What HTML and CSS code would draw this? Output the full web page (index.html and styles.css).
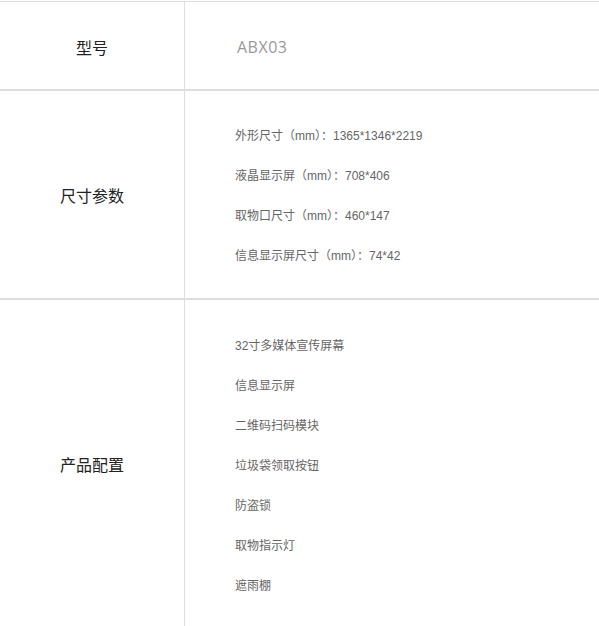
FILE: index.html
```html
<!DOCTYPE html>
<html lang="zh-CN">
<head>
    <meta charset="UTF-8" />
    <meta name="viewport" content="width=device-width, initial-scale=1.0"/>
    <title>产品参数</title>
    <link rel="stylesheet" href="styles.css">
</head>
<body>
<table class="spec-table">
    <tr class="row-model">
        <td class="spec-name">型号</td>
        <td class="spec-value model">ABX03</td>
    </tr>
    <tr class="row-size">
        <td class="spec-name">尺寸参数</td>
        <td class="spec-value">
            <p>外形尺寸（mm）：1365*1346*2219</p>
            <p>液晶显示屏（mm）：708*406</p>
            <p>取物口尺寸（mm）：460*147</p>
            <p>信息显示屏尺寸（mm）：74*42</p>
        </td>
    </tr>
    <tr class="row-config">
        <td class="spec-name">产品配置</td>
        <td class="spec-value">
            <p>32寸多媒体宣传屏幕</p>
            <p>信息显示屏</p>
            <p>二维码扫码模块</p>
            <p>垃圾袋领取按钮</p>
            <p>防盗锁</p>
            <p>取物指示灯</p>
            <p>遮雨棚</p>
        </td>
    </tr>
</table>
</body>
</html>
```

FILE: styles.css
```css
* {
    margin: 0;
    padding: 0;
    box-sizing: border-box;
}

body {
    background-color: #fff;
    font-family: "Liberation Sans", "Noto Sans CJK SC", sans-serif;
    padding-top: 1px;
}

.spec-table {
    width: 100%;
    border-collapse: separate;
    border-spacing: 0;
}

.spec-table td {
    border-top: 1px solid #ddd;
    border-bottom: 1px solid #ddd;
    vertical-align: middle;
}

.spec-name {
    width: 185px;
    border-right: 1px solid #ddd;
    text-align: center;
    font-size: 16px;
    color: #222;
}

.spec-value {
    padding-left: 50px;
    font-size: 12px;
    color: #666;
}

.spec-value p {
    line-height: 40px;
}

/* rows */
.row-model td {
    height: 89px;
    padding-top: 3px;
}

.row-size .spec-value {
    padding-top: 25px;
    padding-bottom: 22px;
}

.row-config .spec-value {
    padding-top: 26px;
    padding-bottom: 22px;
}

.spec-value.model {
    padding-left: 52px;
    font-family: "Open Sans", "Noto Sans CJK SC", sans-serif;
    font-size: 16px;
    letter-spacing: 0.5px;
    color: #999;
}
```
